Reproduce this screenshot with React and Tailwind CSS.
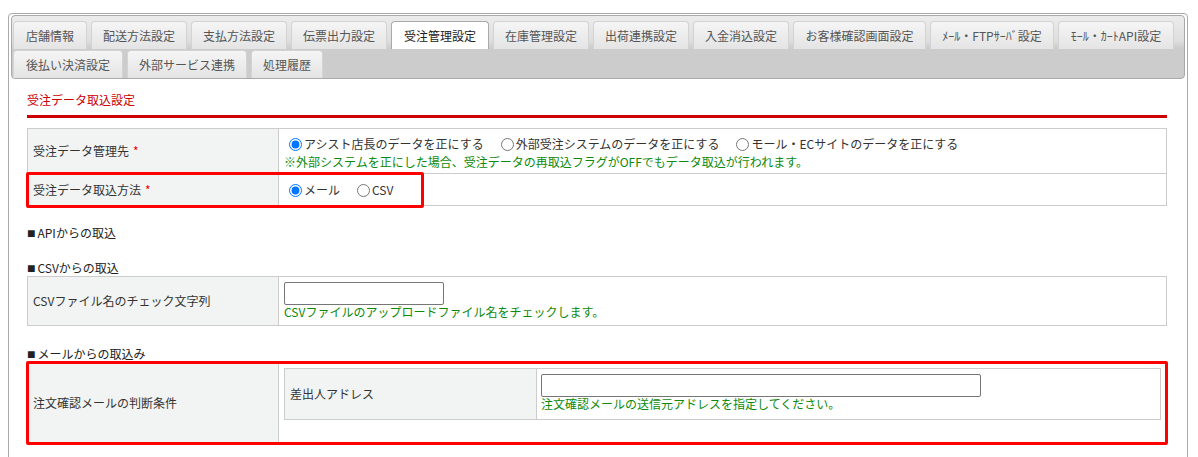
import React from "react";

const row1 = [
  { label: "店舗情報", w: "w-[74px]" },
  { label: "配送方法設定", w: "w-[96px]" },
  { label: "支払方法設定", w: "w-[96px]" },
  { label: "伝票出力設定", w: "w-[96px]" },
  { label: "受注管理設定", w: "w-[98px]", active: true },
  { label: "在庫管理設定", w: "w-[96px]" },
  { label: "出荷連携設定", w: "w-[96px]" },
  { label: "入金消込設定", w: "w-[96px]" },
  { label: "お客様確認画面設定", w: "w-[133px]" },
  { label: "ﾒｰﾙ・FTPｻｰﾊﾞ設定", w: "w-[124px]" },
  { label: "ﾓｰﾙ・ｶｰﾄAPI設定", w: "w-[116px]" },
];

const row2 = [
  { label: "後払い決済設定", w: "w-[110px]" },
  { label: "外部サービス連携", w: "w-[120px]" },
  { label: "処理履歴", w: "w-[72px]" },
];

function Tab({ label, w, active }) {
  return (
    <div
      className={`${w} flex h-full items-center justify-center rounded-t-[4px] border border-b-0 ${
        active
          ? "border-[#aaaaaa] bg-white text-[#212121]"
          : "border-[#d3d3d3] bg-[linear-gradient(to_bottom,#f5f5f5,#e4e4e4)] text-[#555555]"
      }`}
    >
      {label}
    </div>
  );
}

function Radio({ name, checked, first }) {
  return (
    <input
      type="radio"
      name={name}
      defaultChecked={checked}
      className={`${first ? "ml-[5px]" : "ml-[17px]"} mr-[2px] h-[13px] w-[13px] shrink-0`}
    />
  );
}

function Heading({ children, className = "mt-[19px]" }) {
  return (
    <p className={`${className} flex items-center leading-[16px] text-[#222]`}>
      <span className="mr-[2px] font-['Liberation_Sans',sans-serif] text-[14px]">■</span>
      {children}
    </p>
  );
}

function Label({ children, req }) {
  return (
    <div className="flex w-[251px] shrink-0 items-center border-r border-[#cccccc] bg-[#f2f3f3] px-[5px]">
      {children}
      {req && <span className="ml-[4px] text-[#ee0000]">*</span>}
    </div>
  );
}

export default function App() {
  return (
    <div className="h-[457px] overflow-hidden bg-white pl-[8px] pt-[13px] font-['Noto_Sans_CJK_JP',sans-serif] text-[12px] text-[#333333]">
      <div className="h-[470px] w-[1180px] rounded-[4px] border border-[#aaaaaa] px-[2px] pt-[1px]">
        {/* tab header */}
        <div className="h-[64px] rounded-[4px] border border-[#aaaaaa] bg-[linear-gradient(to_bottom,#ececec_0%,#dedede_40%,#cccccc_52%,#cccccc_100%)] pl-[1px] pt-[5px]">
          <div className="flex h-[28px] gap-[4px]">
            {row1.map((t) => (
              <Tab key={t.label} {...t} />
            ))}
          </div>
          <div className="mt-[1px] flex h-[28px] gap-[4px]">
            {row2.map((t) => (
              <Tab key={t.label} {...t} />
            ))}
          </div>
        </div>

        <div className="pl-[16px] pr-[18px]">
          <h2 className="mt-[13px] leading-[16px] text-[#cc0000]">受注データ取込設定</h2>
          <div className="mt-[7px] h-[3px] bg-[#cc0000]" />

          {/* 受注データ設定 */}
          <div className="relative mt-[10px]">
            <div className="border border-[#cccccc]">
              <div className="flex h-[44px]">
                <Label req>受注データ管理先</Label>
                <div className="flex-1 pl-[5px] pt-[6px] leading-[18px]">
                  <div className="flex items-center">
                    <Radio name="src" checked first />
                    <span>アシスト店長のデータを正にする</span>
                    <Radio name="src" />
                    <span>外部受注システムのデータを正にする</span>
                    <Radio name="src" />
                    <span>モール・ECサイトのデータを正にする</span>
                  </div>
                  <div className="text-[#0c8a0c]">
                    ※外部システムを正にした場合、受注データの再取込フラグがOFFでもデータ取込が行われます。
                  </div>
                </div>
              </div>
              <div className="flex h-[32px] border-t border-[#cccccc]">
                <Label req>受注データ取込方法</Label>
                <div className="flex flex-1 items-center pl-[5px] pt-[1px] leading-[18px]">
                  <Radio name="method" checked first />
                  <span>メール</span>
                  <Radio name="method" />
                  <span>CSV</span>
                </div>
              </div>
            </div>
            <div className="pointer-events-none absolute left-[-1px] top-[44px] h-[36px] w-[398px] rounded-[2px] border-[3px] border-[#ff0000]" />
          </div>

          <Heading>APIからの取込</Heading>
          <Heading>CSVからの取込</Heading>

          <div className="border border-[#cccccc]">
            <div className="flex h-[48px]">
              <Label>CSVファイル名のチェック文字列</Label>
              <div className="flex-1 pl-[5px] pt-[5px]">
                <input
                  type="text"
                  className="block h-[23px] w-[160px] rounded-[2px] border border-[#767676] bg-white"
                />
                <div className="leading-[14px] text-[#0c8a0c]">
                  CSVファイルのアップロードファイル名をチェックします。
                </div>
              </div>
            </div>
          </div>

          <Heading className="mt-[20px]">メールからの取込み</Heading>

          <div className="relative">
            <div className="flex border border-[#cccccc]">
              <Label>注文確認メールの判断条件</Label>
              <div className="flex-1 px-[5px] pb-[23px] pt-[5px]">
                <div className="flex border border-[#cccccc]">
                  <div className="flex w-[252px] shrink-0 items-center border-r border-[#cccccc] bg-[#f2f3f3] px-[5px]">
                    差出人アドレス
                  </div>
                  <div className="flex-1 pb-[8px] pl-[4px] pt-[5px]">
                    <input
                      type="text"
                      className="block h-[23px] w-[440px] rounded-[2px] border border-[#767676] bg-white"
                    />
                    <div className="leading-[14px] text-[#0c8a0c]">
                      注文確認メールの送信元アドレスを指定してください。
                    </div>
                  </div>
                </div>
              </div>
            </div>
            <div className="pointer-events-none absolute left-[-1px] top-[-1px] h-[84px] w-[1142px] rounded-[2px] border-[3px] border-[#ff0000]" />
          </div>
        </div>
      </div>
    </div>
  );
}
